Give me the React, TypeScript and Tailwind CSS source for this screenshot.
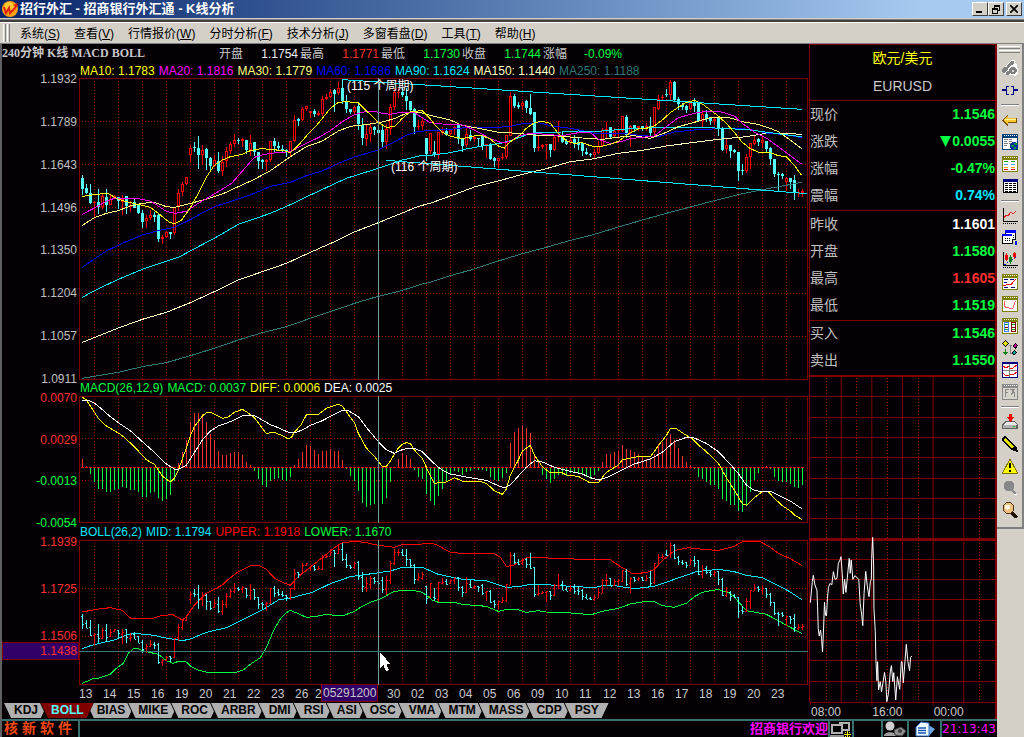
import React from "react";

const MAROON = "#800000";

/* Each bar: direction (r = up, c = down), high, body top, body bottom, low, in plot units. */
const BARS = `c315,325,357,375 c342,354,371,373 c342,370,399,403 r393,397,399,441 c357,397,413,432 r373,380,412,418 c357,382,407,427 r376,389,405,407 r375,378,386,388 c381,381,394,417
r375,387,396,437 c378,378,409,432 r393,407,411,426 c388,396,415,416 c405,406,431,432 c421,430,456,474 r436,446,454,474 r420,435,444,450 c427,435,441,456 c432,436,509,518
r497,502,509,524 r483,487,502,506 c486,486,492,509 r413,413,490,495 r357,370,409,424 r337,342,367,380 r321,321,342,345 r226,235,255,276 c216,231,236,247 c198,234,257,297
r226,240,256,285 c235,239,264,300 c263,264,290,300 r255,270,288,293 c246,274,304,311 r258,276,305,320 r233,244,275,293 r217,223,244,253 r193,211,223,233 c206,210,214,222
r204,209,215,233 c210,210,240,252 r195,219,240,260 c216,216,247,260 c246,247,275,297 c267,270,276,297 r268,272,277,305 r213,213,272,276 c204,213,230,246 c217,229,236,243
c225,237,240,249 c239,240,247,262 r213,213,246,261 r135,150,213,218 c145,147,153,170 r111,119,150,155 r109,109,119,123 r123,123,130,144 c118,124,133,143 r123,130,135,139
r80,87,133,138 r74,81,88,90 r57,66,81,84 c58,60,72,126 r33,54,69,75 c30,55,93,102 c75,93,118,129 c117,118,128,134 r108,111,128,133 c102,108,164,180
c145,165,205,226 r165,193,208,228 r163,171,194,216 c168,171,181,195 c156,181,190,205 c168,180,216,231 r162,177,216,239 r103,112,177,195 r54,66,112,120 r54,66,68,84
c55,66,77,82 c54,78,93,121 c93,93,120,129 c114,118,173,194 r150,168,173,181 r145,154,170,180 c204,204,252,275 r189,189,245,253 c213,246,252,262 r187,187,254,269
r172,185,190,196 c175,184,195,200 r177,180,192,196 r168,172,178,195 c166,166,207,222 c205,207,228,246 r165,192,226,232 c180,196,208,213 r200,202,208,214 c205,205,208,228
c195,199,230,240 r222,222,226,264 c220,222,267,271 c261,264,275,291 r264,265,274,295 r249,261,266,270 r195,196,261,267 r66,79,199,199 c72,79,108,114 c96,105,113,117
r94,99,109,120 c91,95,114,129 c72,114,132,135 c126,126,234,246 r199,231,235,243 r222,227,233,237 r222,222,226,268 c222,222,240,261 r195,201,240,244 r153,198,201,216
c183,195,218,219 c207,214,222,225 r199,212,219,222 c195,207,222,235 c205,218,225,240 c216,219,245,258 c234,246,254,256 c249,252,255,261 r238,246,257,264 r213,228,250,252
r174,180,230,231 r156,177,180,204 c171,171,202,204 r174,183,199,202 r175,180,184,204 r138,138,184,186 c135,141,195,204 r165,169,190,231 c165,165,177,187 r168,170,176,184
c168,168,178,183 r159,169,178,184 c141,168,189,202 r112,112,187,195 r75,88,117,120 r75,81,86,95 c57,73,77,81 r30,37,76,91 c33,36,90,96 c81,88,103,120
c99,106,111,120 c106,108,120,129 r94,99,119,120 c84,99,110,126 c97,97,154,157 r120,133,154,172 c121,132,147,156 c144,145,155,165 r141,148,154,166 c141,141,175,198
c172,174,240,243 r207,225,238,249 c225,226,243,264 c237,240,246,250 c246,246,304,333 c282,301,305,315 r252,262,305,309 r220,220,262,297 r195,210,222,225 c205,208,217,229
r202,210,220,235 c213,213,237,250 c232,235,268,285 c267,267,312,321 c306,312,315,363 c309,313,319,327 r322,325,336,364 c324,324,336,357 c315,330,369,390 r357,367,371,382 r357,364,370,381`
  .split(/\s+/)
  .map((s) => {
    const [high, top, bottom, low] = s.slice(1).split(",").map(Number);
    return { up: s[0] === "r", high, top, bottom, low };
  });

const HISTOGRAM = `252 273 299 321 342 342 351 351 345 344 336 340 346 346 351 366 367 356 351 371 378 372 362 318 265 231 195 142 114 116
117 142 177 195 229 240 240 236 231 233 240 261 271 288 312 330 336 318 312 310 315 318 306 270 252 232 210 213 225 237
228 228 223 229 230 255 282 305 319 348 384 396 390 387 385 387 369 322 279 252 236 240 252 285 307 312 357 378 390 363
342 318 300 288 291 300 291 288 282 285 287 289 306 315 318 309 295 204 171 159 150 159 174 237 262 300 312 324 312 300
300 305 295 294 296 297 308 312 302 288 261 237 237 232 228 210 222 225 232 237 245 252 250 237 207 201 192 177 195 219
243 263 271 282 306 312 321 330 330 343 372 380 390 390 408 413 390 351 315 294 279 273 282 306 318 321 322 327 336 339 330`
  .split(/\s+/)
  .map(Number);

/* Joins two runs of "x,y" points; the second run starts at its own origin. */
function join(first: string, second: string, shift: number) {
  const moved = second
    .trim()
    .split(/\s+/)
    .map((p) => {
      const [x, y] = p.split(",").map(Number);
      return `${x + shift},${y}`;
    });
  return `${first} ${moved.join(" ")}`;
}

const AVERAGES = [
  {
    color: "#307878",
    points: join(
      "37,925 145,907 217,890 289,878 361,857 433,835 505,810 577,788 649,770 721,745 817,713 853,700 925,679 997,661 1057,642",
      "0,637 61,617 133,597 205,573 277,551 349,532 421,511 493,493 565,471 637,450 709,430 781,411 853,392 925,374 997,359 1057,348 1115,337",
      1080
    ),
  },
  {
    color: "#ffffc0",
    points: join(
      "37,817 145,774 217,748 289,727 361,698 433,665 505,630 577,605 649,580 721,547 805,510 853,486 925,458 997,429 1045,409",
      "0,400 61,378 133,351 205,333 277,313 349,296 421,275 493,266 565,250 637,241 709,228 793,217 865,208 949,200 1009,190 1060,190 1115,193",
      1080
    ),
  },
  {
    color: "#0000ff",
    points: join(
      "37,592 73,567 109,543 157,520 217,495 265,482 313,472 361,449 400,427 433,410 505,387 553,370 601,349 661,337 709,317 757,303 805,280 853,261 925,240 961,222 1009,196 1045,184",
      "0,182 61,178 121,171 205,172 241,169 277,161 325,158 361,167 421,175 505,192 577,190 637,197 685,200 733,186 793,180 901,174 961,178 1009,189 1045,192 1085,197 1115,203",
      1080
    ),
  },
  {
    color: "#00e8ff",
    points: join(
      "37,682 73,662 145,628 217,598 325,562 385,530 433,505 505,463 601,430 661,404 721,375 829,325 925,295 997,270 1057,256",
      "0,256 61,248 109,237 157,228 217,219 253,208 289,195 325,187 397,186 445,183 505,184 577,178 649,174 733,172 805,172 901,176 961,180 1021,188 1073,195 1115,200",
      1080
    ),
  },
  {
    color: "#ffff80",
    points: join(
      "37,466 73,443 109,430 145,422 181,408 217,400 253,397 289,410 313,412 361,400 400,390 457,372 505,350 553,328 601,302 661,260 709,230 757,213 805,183 841,169 901,162 937,156 973,146 1009,130 1045,126",
      "0,136 61,150 97,166 145,175 205,187 265,190 325,197 385,198 457,204 517,208 577,200 613,197 661,205 709,187 745,170 793,157 841,143 901,144 937,155 985,163 1021,175 1045,185 1081,210 1115,236",
      1080
    ),
  },
  {
    color: "#ff00ff",
    points: join(
      "37,433 73,414 109,394 133,385 205,386 241,393 265,408 289,424 315,430 349,424 385,400 433,372 485,340 520,300 553,262 577,255 601,250 661,245 709,220 745,203 781,182 817,155 853,134 889,124 913,124 937,130 961,133 985,128 1033,128",
      "0,158 37,162 97,165 133,180 181,206 217,219 241,214 265,198 301,190 337,192 397,197 445,188 481,187 505,208 541,220 565,217 601,206 673,198 709,170 745,143 793,130 829,124 865,124 889,130 913,138 937,160 973,186 1009,204 1045,230 1081,257 1115,282",
      1080
    ),
  },
  {
    color: "#ffff00",
    points: join(
      "37,379 73,374 97,371 115,371 145,388 181,398 217,406 241,412 265,430 289,450 301,458 315,461 335,450 361,413 385,370 409,322 433,286 457,270 481,260 517,253 541,242 577,235 601,239 637,241 661,248 685,226 709,198 745,160 781,115 805,97 829,95 865,98 889,122 925,157 949,172 973,170 997,145 1021,125 1057,122",
      "0,145 13,163 37,187 61,199 97,206 133,198 157,197 181,207 205,228 223,234 241,215 265,200 289,175 313,158 337,154 361,160 385,190 409,212 433,220 457,218 481,227 505,231 541,223 565,214 601,188 625,176 649,175 673,168 697,150 721,128 745,112 769,97 793,91 817,102 841,120 865,138 889,160 913,187 937,217 961,236 985,246 1015,246 1045,257 1069,260 1093,286 1115,316",
      1080
    ),
  },
];

const MACD_LINES = [
  {
    color: "#ffff00",
    points: join(
      "247,67 259,75 271,93 295,130 319,153 343,167 367,182 400,212 439,254 463,268 487,303 511,321 523,310 535,285 547,252 559,219 571,182 583,155 607,123 619,113 631,112 643,118 667,130 685,126 703,112 727,103 739,110 763,128 787,160 799,175 823,172 847,182 865,192 875,186 883,172 903,150 919,120 955,118 979,100 1015,88 1027,93 1051,127 1063,142 1075,175 1099,219 1123,244 1147,274 1159,274 1171,258 1183,238 1195,219 1207,208",
      "19,203 31,205 43,225 67,250 85,290 103,325 127,322 139,321 163,308 187,318 235,318 259,325 283,347 307,358 319,342 331,300 355,255 367,228 391,211 403,240 427,275 451,294 483,292 500,300 535,304 571,324 595,323 619,292 655,270 667,254 700,248 715,244 751,246 775,212 799,182 811,160 829,161 859,181 877,191 895,210 919,230 955,265 979,308 1003,345 1027,386 1040,391 1063,368 1087,350 1105,350 1123,370 1147,392 1171,408 1183,420 1207,434",
      1200
    ),
  },
  {
    color: "#ffffff",
    points: join(
      "247,76 265,76 283,84 307,104 331,125 355,143 391,167 427,200 463,232 499,267 523,282 535,283 559,271 583,233 607,195 631,168 655,153 691,140 727,122 763,122 787,135 811,149 835,158 865,172 885,173 907,165 931,151 967,137 1003,118 1027,106 1045,107 1075,125 1099,157 1135,200 1159,224 1183,235 1207,224",
      "19,221 43,220 67,230 103,266 127,286 151,297 199,306 259,316 295,332 313,339 331,330 355,303 379,277 403,257 430,262 463,277 511,289 547,297 571,308 595,315 619,308 655,290 703,267 751,252 787,232 823,200 859,187 883,189 919,205 955,230 991,268 1015,296 1039,330 1063,346 1087,350 1111,349 1135,360 1171,378 1207,402",
      1200
    ),
  },
];

const BOLL_LINES = [
  {
    color: "#ff0000",
    points: join(
      "247,711 289,703 331,698 367,706 391,729 415,732 463,729 487,721 519,719 547,735 559,726 583,690 619,655 643,643 667,630 685,613 715,590 751,573 775,571 799,583 823,609 847,622 871,631 895,605 931,576 967,548 1003,518 1027,503 1065,499 1099,503 1135,511 1183,517 1207,509",
      "31,508 100,506 115,512 151,532 199,536 283,536 301,547 319,574 340,571 379,548 433,548 463,551 631,554 655,571 673,581 697,596 739,593 763,583 787,557 823,527 865,518 919,524 955,526 1003,514 1027,500 1081,500 1111,517 1135,535 1171,551 1207,572",
      1200
    ),
  },
  {
    color: "#00e8ff",
    points: join(
      "247,821 271,812 307,803 343,795 379,780 405,775 463,781 487,787 547,797 571,792 619,772 679,758 715,741 751,723 787,705 835,675 880,667 937,652 991,626 1051,605 1123,595 1171,588 1207,577",
      "67,577 115,598 187,613 259,617 319,637 355,635 391,628 439,629 481,632 583,638 607,632 643,632 703,641 763,634 829,611 889,590 955,583 1003,590 1039,601 1087,608 1135,632 1171,651 1207,675",
      1200
    ),
  },
  {
    color: "#00ff40",
    points: join(
      "247,925 277,912 295,910 331,898 349,880 370,865 385,835 400,821 415,821 427,827 475,838 499,857 519,865 535,859 559,861 571,873 595,886 619,891 710,891 730,885 751,868 781,848 799,818 823,762 841,732 859,713 871,706 895,716 919,727 943,725 979,718 1003,721 1035,720 1063,709 1087,694 1111,682 1140,672 1159,662 1180,650 1207,646",
      "37,646 67,652 97,675 115,682 163,682 187,688 259,694 295,709 319,703 355,704 379,712 415,707 439,711 499,713 541,716 571,720 607,709 655,700 691,687 739,679 763,680 787,692 823,697 859,685 883,665 907,652 955,643 991,655 1015,680 1039,707 1099,718 1135,737 1171,757 1207,776",
      1200
    ),
  },
];

const INTRADAY =
  "31,248 37,185 40,166 45,195 51,210 53,260 55,325 58,348 62,330 65,355 68,395 71,330 74,247 77,285 80,288 83,235 86,202 91,190 96,195 101,155 106,178 112,175 116,130 121,120 124,110 128,165 131,222 135,178 139,217 144,165 149,115 152,160 155,120 160,178 166,167 178,178 182,250 187,285 190,317 194,220 199,154 204,200 209,230 213,185 216,178 217,115 220,52 223,135 224,265 228,335 230,422 233,482 235,425 238,510 243,485 247,515 251,490 256,457 260,485 263,545 268,520 274,450 277,437 281,485 284,458 290,540 295,470 302,508 307,425 309,425 313,488 318,425 322,373 327,425 332,452 335,412 339,408";

/* Day lines, measured from the plot's left edge. */
const DAY_LINES = [
  ...Array.from({ length: 10 }, (_, i) => 45 + 72 * i),
  ...Array.from({ length: 20 }, (_, i) => 753 + 72 * i),
].filter((x) => x < 2180);

const snap = (v: number) => Math.floor(v / 3) * 3;

/* Rows and columns of square dots, as one filled path. */
function dotsDown(x: number, from: number, to: number) {
  let d = "";
  for (let y = from; y < to - 3; y += 9) d += `M${x} ${y}h3v3h-3z`;
  return d;
}

function dotsAcross(y: number, from: number, to: number) {
  let d = "";
  for (let x = from; x < to - 3; x += 9) d += `M${x} ${y}h3v3h-3z`;
  return d;
}

function Frame({ left, top, height, rows }: { left: number; top: number; height: number; rows: number[] }) {
  const dots =
    DAY_LINES.map((x) => dotsDown(left + x, top + 9, top + height)).join("") +
    rows.map((y) => dotsAcross(y, left + 9, left + 2184)).join("");
  return (
    <>
      <path d={dots} fill="#a00000" />
      <rect x={left + 1.5} y={top + 1.5} width={2184} height={height - 3} fill="none" stroke={MAROON} strokeWidth={3} />
    </>
  );
}

function Lines({ lines }: { lines: { color: string; points: string }[] }) {
  return (
    <g fill="none" strokeWidth={3}>
      {lines.map((l) => (
        <polyline key={l.color} stroke={l.color} points={l.points} />
      ))}
    </g>
  );
}

function PriceChart() {
  return (
    <svg className="block h-[302px] w-full" viewBox="27 24 2187 906" preserveAspectRatio="none" shapeRendering="crispEdges">
      <Frame left={27} top={24} height={906} rows={[153, 282, 411, 540, 669, 798]} />
      {BARS.map((b, i) => {
        const x = 36 + 12 * i;
        const color = b.up ? "#ff0000" : "#54fcfc";
        const high = snap(b.high);
        const low = snap(b.low);
        const top = snap(b.top);
        const bodyHeight = Math.max(3, snap(b.bottom) - top);
        return (
          <g key={i} fill={color}>
            <rect x={x} y={high} width={3} height={Math.max(3, low - high)} />
            <rect x={x - 3} y={top} width={9} height={bodyHeight} />
            {b.up && bodyHeight > 6 && <rect x={x} y={top + 3} width={3} height={bodyHeight - 6} fill="#040004" />}
          </g>
        );
      })}
      <Lines lines={AVERAGES} />
      <line x1="817" y1="29" x2="2195" y2="118" stroke="#00e8ff" strokeWidth="3" />
      <line x1="949" y1="271" x2="2212" y2="371" stroke="#00e8ff" strokeWidth="3" />
      <rect x="924" y="24" width="3" height="906" fill="#709898" />
    </svg>
  );
}

function MacdChart() {
  return (
    <svg className="block h-[127px] w-full" viewBox="237 63 2187 381" preserveAspectRatio="none" shapeRendering="crispEdges">
      <Frame left={237} top={63} height={381} rows={[189, 315]} />
      {HISTOGRAM.map((v, i) => {
        const x = 246 + 12 * i;
        const y = snap(v);
        return (
          <g key={i}>
            <rect x={x} y={Math.min(y, 276)} width={3} height={Math.max(3, Math.abs(y - 276))} fill={v < 277 ? "#ff3030" : "#00ff40"} />
            <rect x={x - 3} y={276} width={9} height={3} fill="#ff0000" />
          </g>
        );
      })}
      <Lines lines={MACD_LINES} />
      <rect x="1134" y="63" width="3" height="381" fill="#709898" />
    </svg>
  );
}

function BollChart() {
  const y = (v: number) => snap(483.2 + 0.745 * v);
  return (
    <svg className="block h-[145px] w-full" viewBox="237 495 2187 435" preserveAspectRatio="none" shapeRendering="crispEdges">
      <Frame left={237} top={495} height={435} rows={[639, 783]} />
      <Lines lines={BOLL_LINES} />
      {BARS.map((b, i) => {
        const x = 246 + 12 * i;
        const open = y(b.up ? b.bottom : b.top);
        const close = y(b.up ? b.top : b.bottom);
        return (
          <g key={i} fill={b.up ? "#ff0000" : "#54fcfc"}>
            <rect x={x} y={y(b.high)} width={3} height={Math.max(3, y(b.low) - y(b.high))} />
            <rect x={x - 3} y={open} width={3} height={3} />
            <rect x={x + 3} y={close} width={3} height={3} />
          </g>
        );
      })}
      <rect x="1134" y="495" width="3" height="435" fill="#709898" />
      <rect x="237" y="828" width="2187" height="3" fill="#387878" />
      <path d="M1140 831v48l10-9 8 18 9-3-8-18h12z" fill="#fff" />
    </svg>
  );
}

function IntradayChart() {
  const solid = [124.5, 217.5, 310.5, 403.5, 496.5];
  const dotted = [78, 171, 264, 357, 450, 543];
  const rows = [-370.5, -307.5, -247.5, -187.5, -124.5, -64.5, -4.5, 118.5, 178.5, 238.5, 301.5, 361.5, 421.5, 484.5, 547.5];
  return (
    <svg className="block h-[328px] w-full" viewBox="27 -429 564 984" preserveAspectRatio="none" shapeRendering="crispEdges">
      <path d={dotted.map((x) => dotsDown(x, -426, 549)).join("")} fill="#a00000" />
      <g stroke={MAROON} strokeWidth="3">
        {solid.map((x) => (
          <line key={x} x1={x} x2={x} y1="-429" y2="549" />
        ))}
        {rows.map((y) => (
          <line key={y} x1="27" x2="591" y1={y} y2={y} />
        ))}
        <line x1="27" x2="591" y1="58.5" y2="58.5" strokeWidth="9" />
        <line x1="28.5" x2="28.5" y1="-429" y2="549" />
        <path d="M31.5 549v9M217.5 549v9M403.5 549v9" />
      </g>
      <polyline points={INTRADAY} fill="none" stroke="#fff" strokeWidth="3" />
    </svg>
  );
}

function Legend({ items, className }: { items: [string, string][]; className: string }) {
  return (
    <div className={`flex items-center gap-1 overflow-hidden whitespace-nowrap pl-[78px] ${className}`}>
      {items.map(([text, color]) => (
        <span key={text} className={color}>
          {text}
        </span>
      ))}
    </div>
  );
}

/* Tool strip drawings on a 16 x 16 grid. */
function Notebook({ frame, children }: { frame: string; children: React.ReactNode }) {
  return (
    <>
      <path d="M0 0h16v16H0z" fill={frame} />
      <path d="M1 4h14v11H1z" fill="#fff" />
      <path d="M2 1h1v1H2zM4 1h1v1H4zM6 1h1v1H6zM8 1h1v1H8zM10 1h1v1h-1zM12 1h1v1h-1zM14 1h1v1h-1z" fill="#fff" />
      {children}
    </>
  );
}

const TOOLS: ({ name: string; art: React.ReactNode } | null)[] = [
  {
    name: "电话",
    art: (
      <>
        <path d="M1 9l6-7 3-2h3v3l2 2v2l2 3-1 4-3 2-3-1H5l-4-2z" fill="#fff" />
        <path d="M5 5l4-4h3v3L8 6 6 8zM0 9l2-2h4v2L4 11 3 13H1l-1-2z" fill="#808080" />
        <circle cx="11" cy="10.500" r="3.700" fill="#808080" />
        <circle cx="6" cy="13" r="2" fill="#808080" />
        <path d="M10 10h2v2h-2z" fill="#d4d0c8" />
      </>
    ),
  },
  {
    name: "连接",
    art: <path d="M0 7h4v2H0zM12 7h4v2h-4zM4 4h3v1H5v7h2v1H4zM9 4h3v9H9v-1h2V5H9z" fill="#000080" />,
  },
  null,
  {
    name: "后退",
    art: (
      <>
        <path d="M0 8l6-6v4h9v5H6v4z" fill="#705000" />
        <path d="M1 8l5-5v3h8v4H6v3z" fill="#ffc830" />
        <path d="M3 7h11v1H3z" fill="#fff0a0" />
      </>
    ),
  },
  {
    name: "信息",
    art: (
      <Notebook frame="#004078">
        <path d="M2 5h4v1H2zM2 7h3v1H2zM2 9h4v1H2zM2 11h3v1H2zM7 5h3v1H7zM7 7h3v1H7zM7 9h2v1H7z" fill="#808080" />
        <circle cx="12" cy="12" r="4" fill="#0030a0" />
        <path d="M9 11h3v2h-2zM12 9h3v2h-2zM12 13h2v2h-2z" fill="#10a020" />
      </Notebook>
    ),
  },
  {
    name: "报价",
    art: (
      <Notebook frame="#808000">
        <path d="M2 5h4v1H2zM9 5h4v1H9z" fill="#10a020" />
        <path d="M2 8h4v1H2zM9 8h4v1H9z" fill="#40a0ff" />
        <path d="M2 11h4v1H2zM9 11h4v1H9z" fill="#ffa000" />
        <path d="M2 13h4v1H2zM9 13h4v1H9z" fill="#e00000" />
      </Notebook>
    ),
  },
  {
    name: "列表",
    art: (
      <>
        <path d="M1 1h15v14H1z" fill="#000" />
        <path d="M2 4h13v10H2z" fill="#fff" />
        <path d="M1 1h15v3H1z" fill="#000080" />
        <path
          d="M3 5h3v1H3zM7 5h3v1H7zM11 5h3v1h-3zM3 7h3v1H3zM7 7h3v1H7zM11 7h3v1h-3zM3 9h3v1H3zM7 9h3v1H7zM11 9h3v1h-3zM3 11h3v1H3zM7 11h3v1H7zM11 11h3v1h-3zM3 13h3v1H3zM7 13h3v1H7zM11 13h3v1h-3z"
          fill="#000"
        />
      </>
    ),
  },
  null,
  {
    name: "分时",
    art: (
      <>
        <path d="M1 0h1v13h14v1H1z" fill="#000" />
        <path d="M1 15h1v1H1zM3 15h1v1H3zM5 15h1v1H5zM7 15h1v1H7zM9 15h1v1H9zM11 15h1v1h-1zM13 15h1v1h-1z" fill="#000" />
        <path d="M2 10l2-3 2 1 3-4 2 2 3-3" fill="none" stroke="#e02020" />
      </>
    ),
  },
  {
    name: "多窗",
    art: (
      <>
        <path d="M3 1h11v9H3zM0 4h11v10H0z" fill="#000" />
        <path d="M4 3h9v6H4zM1 6h9v7H1z" fill="#fff" />
        <path d="M3 0h11v3H3zM0 4h10v2H0zM13 11h2v4h-2z" fill="#0000ff" />
        <path d="M3 8h1v1H3zM5 8h1v1H5zM7 8h1v1H7zM3 10h1v1H3zM5 10h1v1H5zM7 10h1v1H7zM11 5h1v1h-1zM11 7h1v1h-1z" fill="#000" />
      </>
    ),
  },
  {
    name: "K线",
    art: (
      <>
        <path d="M1 0h1v13h14v1H1z" fill="#000" />
        <path d="M1 15h1v1H1zM3 15h1v1H3zM5 15h1v1H5zM7 15h1v1H7zM9 15h1v1H9zM11 15h1v1h-1zM13 15h1v1h-1z" fill="#000" />
        <path d="M2 12h2v1H2zM5 10h1v1H5zM10 7h1v1h-1zM12 5h2v1h-2z" fill="#0000ff" />
        <path d="M3 3h3v5H3zM4 1h1v8H4zM11 1h3v4h-3zM12 0h1v7h-1z" fill="#f00000" />
        <path d="M7 5h3v5H7zM8 3h1v9H8z" fill="#108020" />
      </>
    ),
  },
  {
    name: "叠加",
    art: (
      <Notebook frame="#808000">
        <path d="M2 5h4v1H2zM8 5h4v1H8zM2 8h3v1H2zM2 13h4v1H2zM9 13h4v1H9z" fill="#000080" />
        <path d="M1 11h3l2-1 3 1 3-4 2-2" fill="none" stroke="#f00000" />
      </Notebook>
    ),
  },
  {
    name: "走势",
    art: (
      <Notebook frame="#808000">
        <path d="M2 5v5l3 2 1-1 2 2 1-1h2l2-6 1-1" fill="none" stroke="#ff6060" />
      </Notebook>
    ),
  },
  {
    name: "对比",
    art: (
      <Notebook frame="#808000">
        <path d="M2.500 4.500h4v9h-4z" fill="#fff" stroke="#4080ff" />
        <path d="M9.500 4.500h4v9h-4z" fill="#fff" stroke="#800000" />
        <path d="M3 6h3v1H3zM10 6h3v1h-3zM3 11h3v1H3zM10 11h3v1h-3z" fill="#10a020" />
        <path d="M3 9h3v1H3zM10 9h3v1h-3z" fill="#800000" />
      </Notebook>
    ),
  },
  {
    name: "结构",
    art: (
      <>
        <path d="M7 5h3v1H9v7h2v1H8V6H7z" fill="#808080" />
        <path d="M0 4l3-4 4 3-3 4z" fill="#000" />
        <path d="M1 4l2-3 3 2-2 3z" fill="#e8e000" />
        <path d="M10 6l3-3 3 2-2 4z" fill="#000" />
        <path d="M11 6l2-2 2 1-2 3z" fill="#c000a0" />
        <path d="M9 13l3-3 3 2-3 4z" fill="#000" />
        <path d="M10 13l2-2 2 1-2 3z" fill="#00a0a0" />
        <path d="M1 12h5l-2.500 3zM3 9h1v3H3z" fill="#108020" />
      </>
    ),
  },
  {
    name: "四图",
    art: (
      <>
        <path d="M0 0h16v16H0z" fill="#000080" />
        <path d="M1 2h14v13H1z" fill="#fff" />
        <path d="M7 2h1v13H7zM1 8h14v1H1z" fill="#808080" />
        <path d="M1 4l3 2 3-2M8 6h3l4-3M1 11l2 2 4 1M8 12l3 1 4-3" fill="none" stroke="#f00000" />
      </>
    ),
  },
  {
    name: "F10",
    art: (
      <>
        <path d="M0 0h16v16H0z" fill="#888" />
        <path d="M1 4h14v11H1z" fill="#d8d4cc" />
        <path d="M2 1h1v1H2zM4 1h1v1H4zM6 1h1v1H6zM8 1h1v1H8zM10 1h1v1h-1zM12 1h1v1h-1zM14 1h1v1h-1z" fill="#fff" />
        <path d="M3 5h4v1H4v2h2v1H4v4H3zM8 5h5v1h-1v2h1v5h-1V9h-1l-1 2H9l1-3V6H8z" fill="#888" />
      </>
    ),
  },
  null,
  {
    name: "下载",
    art: (
      <>
        <path d="M0 11l3-4h10l3 4v4H0z" fill="#606060" />
        <path d="M1 11l3-3h8l3 3z" fill="#e8e8e8" />
        <path d="M1 11h13v3H1z" fill="#b0b0b0" />
        <path d="M7 0h3v3h2l-3.500 5L5 3h2z" fill="#f00000" />
        <path d="M11 12h2v1h-2z" fill="#10c020" />
      </>
    ),
  },
  {
    name: "画线",
    art: (
      <>
        <path d="M0 2l3-2 11 10 2 5-1 1-5-2L0 5z" fill="#000" />
        <path d="M3 2l9 8-2 2-8-7z" fill="#e8e000" />
      </>
    ),
  },
  {
    name: "预警",
    art: (
      <>
        <path d="M8 1l7.500 14H.5z" fill="#ffff00" stroke="#807000" />
        <path d="M7 5h2v5H7zM7 12h2v2H7z" fill="#000" />
      </>
    ),
  },
  {
    name: "缩小",
    art: (
      <>
        <circle cx="7" cy="6" r="5.500" fill="#888" />
        <path d="M10 10l4 4" stroke="#888" strokeWidth="2" />
        <path d="M12 14l3 1" stroke="#fff" />
      </>
    ),
  },
  {
    name: "放大",
    art: (
      <>
        <path d="M9 10l6 6" stroke="#201008" strokeWidth="3" />
        <circle cx="6.500" cy="6" r="5.500" fill="#f0c080" stroke="#503010" />
        <circle cx="5.500" cy="5" r="2.500" fill="#fff4e0" />
      </>
    ),
  },
];

const MENUS = [
  ["系统", "S"],
  ["查看", "V"],
  ["行情报价", "W"],
  ["分时分析", "F"],
  ["技术分析", "J"],
  ["多窗看盘", "D"],
  ["工具", "T"],
  ["帮助", "H"],
];

const SUMMARY = [
  ["开盘", "1.1754", "text-[#f0f0f0]"],
  ["最高", "1.1771", "text-[#ff3030]"],
  ["最低", "1.1730", "text-[#00ff40]"],
  ["收盘", "1.1744", "text-[#00ff40]"],
  ["涨幅", "-0.09%", "text-[#00ff40]"],
];

const QUOTE_GROUPS = [
  [
    { label: "现价", value: "1.1546", color: "text-[#00ff40]" },
    { label: "涨跌", value: "0.0055", color: "text-[#00ff40]", falling: true },
    { label: "涨幅", value: "-0.47%", color: "text-[#00ff40]" },
    { label: "震幅", value: "0.74%", color: "text-[#00e8ff]" },
  ],
  [
    { label: "昨收", value: "1.1601", color: "text-white" },
    { label: "开盘", value: "1.1580", color: "text-[#00ff40]" },
    { label: "最高", value: "1.1605", color: "text-[#ff3030]" },
    { label: "最低", value: "1.1519", color: "text-[#00ff40]" },
  ],
  [
    { label: "买入", value: "1.1546", color: "text-[#00ff40]" },
    { label: "卖出", value: "1.1550", color: "text-[#00ff40]" },
  ],
];

/* The cursor's date label takes the place of the days it lies over. */
const DATES = ["13", "14", "15", "16", "19", "20", "21", "22", "23", "26", "2", "", "", "30", "02", "03", "04", "05", "06", "09", "10", "11", "12", "13", "16", "17", "18", "19", "20", "23"];
const TABS = "KDJ BOLL BIAS MIKE ROC ARBR DMI RSI ASI OSC VMA MTM MASS CDP PSY".split(" ");

const CAPTION_BUTTON =
  "flex h-[14px] w-4 items-center justify-center border border-t-white border-l-white border-r-[#404040] border-b-[#404040] bg-[#d4d0c8]";

function TitleBar() {
  return (
    <header className="flex h-[18px] items-center bg-linear-to-r from-[#0a246a] to-[#a6caf0] to-90% pr-[2px]">
      <svg className="mr-[2px] ml-[2px] h-4 w-4" viewBox="0 0 16 16">
        <circle cx="8" cy="8" r="8" fill="#f8a010" />
        <circle cx="7" cy="6" r="5" fill="#ffc830" />
        <path d="M2 6l2 6 3-5 1 5 4-4 3-4" fill="none" stroke="#e02010" strokeWidth="2" />
        <path d="M11 4l5-2-1 4z" fill="#e02010" />
      </svg>
      <h1 className="flex-1 text-[13px] leading-[18px] font-bold text-white">招行外汇 - 招商银行外汇通 - K线分析</h1>
      <button type="button" aria-label="最小化" className={CAPTION_BUTTON}>
        <svg className="h-2 w-2" viewBox="0 0 8 8" shapeRendering="crispEdges">
          <path d="M0 6h6v2H0z" />
        </svg>
      </button>
      <button type="button" aria-label="还原" className={CAPTION_BUTTON}>
        <svg className="h-[9px] w-2" viewBox="0 0 8 9" shapeRendering="crispEdges">
          <path d="M2 0h6v6H6V5h1V2H3v1H2zM0 3h6v6H0zM1 5v3h4V5z" fillRule="evenodd" />
        </svg>
      </button>
      <button type="button" aria-label="关闭" className={`ml-[2px] ${CAPTION_BUTTON}`}>
        <svg className="h-2 w-2" viewBox="0 0 8 8">
          <path d="M0 0l8 8M8 0L0 8" stroke="#000" strokeWidth="1.700" />
        </svg>
      </button>
    </header>
  );
}

function MenuBar() {
  return (
    <>
      <div className="h-[4px] border-t border-b-2 border-t-[#d4d0c8] border-b-[#404040] bg-[#808080]" />
      <nav className="flex h-[22px] items-center gap-2 border-t border-b border-t-white border-b-[#808080] bg-[#d4d0c8] pl-[3px] text-[12px]">
        <span className="flex gap-px">
          <span className="h-[18px] w-[3px] border-x border-l-white border-r-[#808080]" />
          <span className="h-[18px] w-[3px] border-x border-l-white border-r-[#808080]" />
        </span>
        <span className="flex gap-[14px] pt-[2px] pl-[2px]">
          {MENUS.map(([label, key]) => (
            <button key={key} type="button" className="whitespace-nowrap text-black">
              {label}(<u>{key}</u>)
            </button>
          ))}
        </span>
      </nav>
    </>
  );
}

function Charts() {
  return (
    <main className="flex min-w-0 flex-1 flex-col text-[12px] leading-[14px]">
      <div className="flex h-[19px] items-center whitespace-nowrap text-[#c8c8c8]">
        <h2 className="w-[217px] pb-[2px] font-['Liberation_Serif','Noto_Sans_CJK_SC',serif] text-[12px] font-bold">240分钟 K线 MACD BOLL</h2>
        {SUMMARY.map(([label, value, color]) => (
          <span key={label} className="flex w-[81px]">
            {label}
            <span className={`flex-1 pr-[2px] text-right ${color}`}>{value}</span>
          </span>
        ))}
      </div>
      <Legend
        className="h-[15px]"
        items={[
          ["MA10: 1.1783", "text-[#ffff00]"],
          ["MA20: 1.1816", "text-[#ff00ff]"],
          ["MA30: 1.1779", "text-[#ffff80]"],
          ["MA60: 1.1686", "text-[#0000ff]"],
          ["MA90: 1.1624", "text-[#00e8ff]"],
          ["MA150: 1.1440", "text-[#ffffc0]"],
          ["MA250: 1.1188", "text-[#307878]"],
        ]}
      />
      <section className="flex">
        <div className="-my-[6px] flex w-[77px] flex-col justify-between pr-[2px] text-right text-[#c0c0c0]">
          {["1.1932", "1.1789", "1.1643", "1.1496", "1.1350", "1.1204", "1.1057", "1.0911"].map((v) => (
            <span key={v}>{v}</span>
          ))}
        </div>
        <div className="relative min-w-0 flex-1">
          <PriceChart />
          <span className="absolute top-[1px] left-[268px] text-white">(115 个周期)</span>
          <span className="absolute top-[82px] left-[312px] text-white">(116 个周期)</span>
        </div>
      </section>
      <Legend
        className="h-4"
        items={[
          ["MACD(26,12,9)", "text-[#00ff40]"],
          ["MACD: 0.0037", "text-[#00ff40]"],
          ["DIFF: 0.0006", "text-[#ffff00]"],
          ["DEA: 0.0025", "text-white"],
        ]}
      />
      <section className="flex">
        <div className="-mt-[5px] -mb-[7px] flex w-[77px] flex-col justify-between pr-[2px] text-right">
          <span className="text-[#ff3030]">0.0070</span>
          <span className="text-[#ff3030]">0.0029</span>
          <span className="text-[#00ff40]">-0.0013</span>
          <span className="text-[#00ff40]">-0.0054</span>
        </div>
        <div className="min-w-0 flex-1">
          <MacdChart />
        </div>
      </section>
      <Legend
        className="h-[17px]"
        items={[
          ["BOLL(26,2)", "text-[#00e8ff]"],
          ["MID: 1.1794", "text-[#00e8ff]"],
          ["UPPER: 1.1918", "text-[#ff0000]"],
          ["LOWER: 1.1670", "text-[#00ff40]"],
        ]}
      />
      <section className="flex">
        <div className="relative w-[77px] text-right text-[#ff3030]">
          <div className="-mt-[5px] flex flex-col gap-[33px] pr-[2px]">
            <span>1.1939</span>
            <span>1.1725</span>
            <span>1.1506</span>
          </div>
          <span className="absolute top-[102px] right-0 left-0 h-[18px] border border-[#800000] bg-[#300068] pt-px pr-[1px] pb-px">1.1438</span>
        </div>
        <div className="min-w-0 flex-1">
          <BollChart />
        </div>
      </section>
      <div className="relative ml-[77px] flex h-[18px] items-center text-[#c8c8c8]">
        {DATES.map((d, i) => (
          <span key={i} className={`w-0 ${i === 9 ? "flex-[20]" : "flex-[24]"}`}>
            {d}
          </span>
        ))}
        <span className="w-0 flex-[13]" />
        <span className="absolute top-0 left-[33.2%] h-[17px] border border-t-0 border-[#800000] bg-[#300068] px-px pt-px">05291200</span>
      </div>
      <div role="tablist" className="flex h-[16px] pl-px font-bold">
        {TABS.map((t) => (
          <button
            key={t}
            type="button"
            role="tab"
            aria-selected={t === "BOLL"}
            className={`-mr-[8px] h-[15px] bg-black [clip-path:polygon(0_0,100%_0,calc(100%-7px)_100%,7px_100%)] ${t === "BOLL" ? "relative z-10" : ""}`}
          >
            <span
              className={`block h-full pr-[10px] pl-[11px] leading-[15px] [clip-path:polygon(1px_0,100%_0,calc(100%-7px)_100%,8px_100%)] ${
                t === "BOLL" ? "bg-[#800000] text-[#54fcfc]" : "bg-[#b0b0b0] text-black"
              }`}
            >
              {t}
            </span>
          </button>
        ))}
      </div>
    </main>
  );
}

function QuotePanel() {
  return (
    <aside className="ml-px flex w-[188px] flex-col border-t border-r-2 border-[#800000] text-[14px]">
      <div className="flex h-[56px] flex-col items-center justify-around border-b border-l border-[#800000]">
        <span className="text-[#ffff00]">欧元/美元</span>
        <span className="font-medium text-[#c8c8c8]">EURUSD</span>
      </div>
      {QUOTE_GROUPS.map((group, g) => (
        <dl key={g} className={`border-l border-[#800000] ${g === 2 ? "border-b-2" : "border-b"}`}>
          {group.map(({ label, value, color, ...rest }, i) => (
            <div key={label} className={`flex items-center justify-between pb-[2px] ${g < 2 && i === 0 ? "h-[28px]" : "h-[27px]"}`}>
              <dt className="text-[#c0c0c0]">{label}</dt>
              <dd className={`flex items-center font-bold ${color}`}>
                {"falling" in rest && (
                  <svg className="h-[11px] w-[12px]" viewBox="0 0 12 11" fill="currentColor">
                    <path d="M0 0h11L5.500 11z" />
                  </svg>
                )}
                {value}
              </dd>
            </div>
          ))}
        </dl>
      ))}
      <IntradayChart />
      <div className="grid grid-cols-3 pl-[2px] text-[12px] leading-[14px] text-[#c8c8c8]">
        <span>08:00</span>
        <span>16:00</span>
        <span>00:00</span>
      </div>
    </aside>
  );
}

function StatusBar() {
  return (
    <footer className="flex h-[18px] items-stretch overflow-hidden border-t-2 border-[#387070] bg-[#040004]">
      <span className="w-[78px] border-r-2 border-[#387070] pl-[2px] font-['Liberation_Serif','Noto_Sans_CJK_SC',serif] text-[14px] leading-[16px] font-bold tracking-[4px] text-[#f04810]">
        核新软件
      </span>
      <span className="flex-1 text-right text-[13px] leading-[16px] font-bold whitespace-nowrap text-[#ff00ff]">招商银行欢迎</span>
      <span className="flex w-[26px] items-center border-x-2 border-[#387070]">
        <svg className="h-4 w-[22px]" viewBox="0 0 22 16" shapeRendering="crispEdges">
          <path d="M9 1h11v9H9z" fill="#b0b0b0" />
          <path d="M11 3h7v5h-7z" fill="#000" />
          <path d="M1 3h12v10H1z" fill="#b0b0b0" />
          <path d="M3 5h8v6H3z" fill="#000" />
          <path d="M0 14h14v2H0z" fill="#909090" />
          <path d="M17 10h1v6h-1zM14 13h7v1h-7zM15 11h1v1h-1zM19 11h1v1h-1zM15 15h1v1h-1zM19 15h1v1h-1z" fill="#f0f000" />
        </svg>
      </span>
      <span className="w-[27px]" />
      <span className="flex w-[28px] items-center border-x-2 border-[#387070]">
        <svg className="h-4 w-6" viewBox="0 0 24 16">
          <circle cx="7" cy="5" r="4.500" fill="#d0d0d0" />
          <path d="M1 15c0-5 12-5 12 0z" fill="#a0a0a0" />
          <path d="M11 9l7-3 5 4-4 5-7-1z" fill="#909090" stroke="#404040" />
          <circle cx="17" cy="10" r="2" fill="#404040" />
        </svg>
      </span>
      <span className="flex w-[31px] items-center justify-center">
        <svg className="h-4 w-6" viewBox="0 0 24 16">
          <path d="M12 2l10 6-7 8z" fill="#70a8e8" />
          <path d="M3 6l5-5 8 1v13H3z" fill="#f0f8ff" stroke="#3070c0" />
          <path d="M5 7h8M5 9.500h8M5 12h8" stroke="#1858b8" strokeWidth="1.500" />
        </svg>
      </span>
      <time className="w-[57px] border-l-2 border-[#387070] font-['DejaVu_Sans',sans-serif] text-[12px] leading-[16px] whitespace-nowrap text-[#ff00ff]">21:13:43</time>
    </footer>
  );
}

function ToolStrip() {
  return (
    <div className="w-[27px] bg-[#d4d0c8]">
      <div className="flex flex-col items-center border-r-2 border-b-2 border-[#808080] pb-[6px]">
        <div className="flex h-[13px] w-full flex-col gap-px px-[2px] pt-[2px]">
          <span className="h-[3px] border-t border-b border-t-white border-b-[#808080]" />
          <span className="h-[3px] border-t border-b border-t-white border-b-[#808080]" />
        </div>
        {TOOLS.map((t, i) =>
          t ? (
            <button key={t.name} type="button" aria-label={t.name} className="flex h-[22px] w-[22px] items-center justify-center">
              <svg className="h-4 w-4" viewBox="0 0 16 16" shapeRendering="crispEdges">
                {t.art}
              </svg>
            </button>
          ) : (
            <span key={i} className="my-[3px] h-[2px] w-[18px] border-t border-b border-t-[#808080] border-b-white" />
          )
        )}
      </div>
    </div>
  );
}

export default function App() {
  return (
    <div className="flex min-h-screen flex-col bg-[#040004] font-['Liberation_Sans','Noto_Sans_CJK_SC',sans-serif]">
      <TitleBar />
      <MenuBar />
      <div className="flex flex-1">
        <div className="flex min-w-0 flex-1 flex-col border-l-2 border-[#606060]">
          <div className="flex flex-1">
            <Charts />
            <QuotePanel />
          </div>
          <StatusBar />
        </div>
        <ToolStrip />
      </div>
    </div>
  );
}
